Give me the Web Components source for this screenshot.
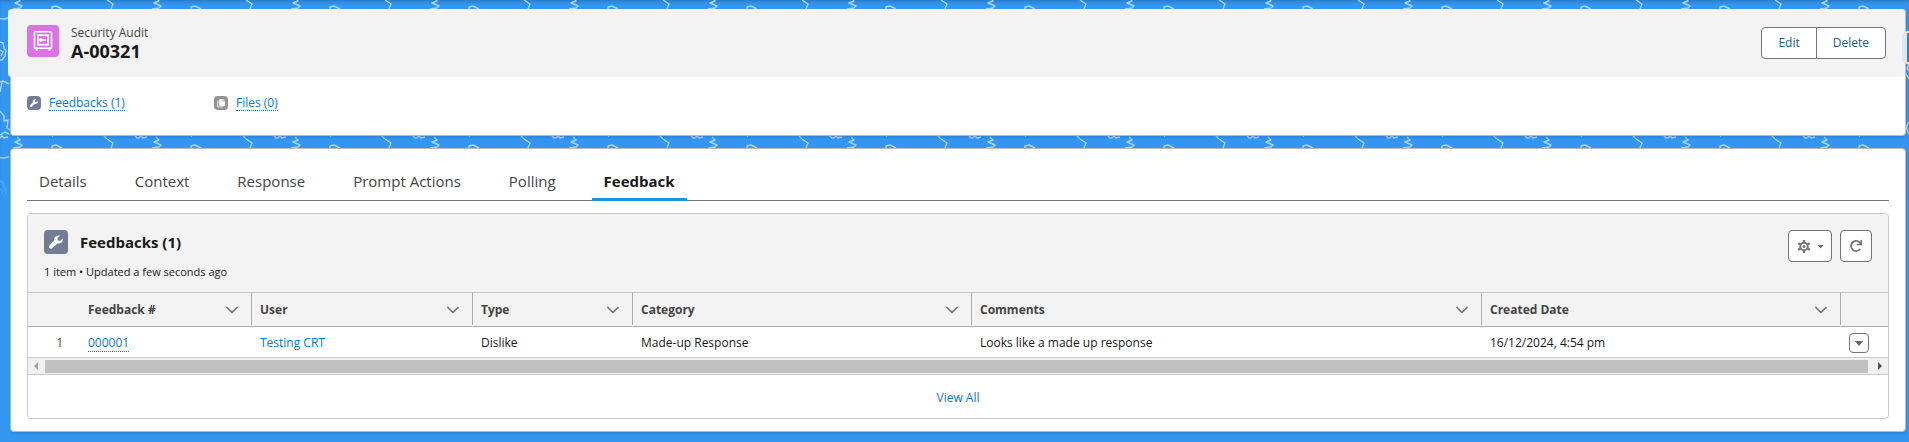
<!DOCTYPE html>
<html lang="en">
<head>
<meta charset="utf-8">
<title>A-00321 | Security Audit</title>
<style>
  html {
    min-height: 100%;
    background: #3296f2;
  }
  body {
    margin: 0;
    font-family: "Open Sans", "Noto Sans", sans-serif;
    font-size: 12px;
    line-height: 18px;
    color: #181818;
    --link: #0b76d3;
    --border: #c9c9c9;
    --border-dark: #747474;
    --shade: #f3f3f3;
  }
</style>
</head>
<body>
<record-page>
  <record-header slot="header" entity="Security Audit" name="A-00321">
    <button-group slot="actions" labels="Edit,Delete"></button-group>
    <quick-link icon="wrench" label="Feedbacks (1)"></quick-link>
    <quick-link icon="files" label="Files (0)"></quick-link>
  </record-header>
  <tab-panel tabs="Details,Context,Response,Prompt Actions,Polling,Feedback" active="Feedback">
    <related-list heading="Feedbacks (1)" meta="1 item • Updated a few seconds ago">
      <feedback-table></feedback-table>
    </related-list>
  </tab-panel>
</record-page>

<script>
const icons = {
  safe: `<svg viewBox="0 0 32 32" fill="none" stroke="#fff">
    <rect x="7.5" y="6.7" width="17" height="16.5" rx="1" stroke-width="1.6"/>
    <rect x="11" y="10.2" width="10" height="9.5" stroke-width="1.7"/>
    <circle cx="13.8" cy="15" r="1.8" fill="#fff" stroke="none"/>
    <path d="M14 15h5" stroke-width="1.8"/>
    <path d="M9.5 23.5v1.300M22.500 23.500v1.300" stroke-width="2.4" stroke-linecap="round"/>
  </svg>`,
  wrench: `<svg viewBox="0 0 24 24">
    <path d="M18.7 8.6l-2.600 2.300-2.200-.4-.6-2.100 2.500-2.700c-2.400-.9-5.200.4-5.700 3-.1.700-.1 1.300.1 1.900l-4.600 4.700c-.8.800-.8 2 0 2.800.8.800 2 .8 2.800 0l4.800-4.700c3.300.9 6.400-1.500 5.500-4.800z" fill="#fff"/>
  </svg>`,
  files: `<svg viewBox="0 0 24 24" fill="#fff">
    <path d="M10.500 5h4.500v3.500c0 .6.400 1 1 1h3v6.500c0 .8-.7 1.500-1.500 1.500h-7c-.8 0-1.500-.7-1.500-1.500v-9.500c0-.8.700-1.500 1.500-1.500z"/>
    <path d="M16 5l3 3.300h-3z"/>
    <path d="M7.500 7.500h-.5c-.8 0-1.500.7-1.500 1.500v9c0 1 .7 1.700 1.700 1.700h7.300c.8 0 1.300-.4 1.300-1.200h-6.800c-.9 0-1.500-.6-1.500-1.500z" opacity=".75"/>
  </svg>`,
  chevron: `<svg viewBox="0 0 12 12" fill="none" stroke="#747474" stroke-width="1.7" stroke-linecap="round" stroke-linejoin="round">
    <path d="M1 3.500l5 5 5-5"/>
  </svg>`,
  gear: `<svg viewBox="0 0 14 14" fill="none" stroke="#747474">
    <circle cx="7" cy="7.5" r="3.7" stroke-width="1.9"/>
    <circle cx="7" cy="7.5" r="1.500" fill="#747474" stroke="none"/>
    <path d="M7 1v2.500M7 11.500v2.500M1.300 4.300l2.100 1.200M10.600 9.500l2.100 1.200M1.300 10.700l2.100-1.200M10.600 5.500l2.100-1.200" stroke-width="2.4"/>
  </svg>`,
  refresh: `<svg viewBox="0 0 14 14" fill="none" stroke="#747474" stroke-width="1.9" stroke-linecap="round">
    <path d="M10.700 10.400a5 5 0 1 1-.2-7.100l1 1"/>
    <path d="M12.300 1.500v4h-4" stroke-width="1.6" stroke-linejoin="round"/>
  </svg>`,
  down: `<svg viewBox="0 0 10 10"><path d="M.8 3h8.400l-4.200 5z" fill="#666"/></svg>`,
};

class SldsIcon extends HTMLElement {
  constructor() {
    super();
    this.attachShadow({ mode: "open" });
    this.shadowRoot.innerHTML = /* HTML */ `
      <style>
        :host {
          display: block;
          flex: none;
          width: 12px;
          height: 12px;
        }
        :host([name="safe"]) {
          width: 32px;
          height: 32px;
          border-radius: 4px;
          background: #d874e4;
        }
        :host([name="wrench"]) {
          width: 24px;
          height: 24px;
          border-radius: 4px;
          background: #747d98;
        }
        :host([name="files"]) {
          border-radius: 4px;
          background: #939393;
        }
        :host([size="small"]) {
          width: 14px;
          height: 14px;
        }
        svg {
          display: block;
          width: 100%;
          height: 100%;
        }
      </style>
      ${icons[this.getAttribute("name")]}
    `;
  }
}

class PageBackdrop extends HTMLElement {
  constructor() {
    super();
    this.attachShadow({ mode: "open" });
    this.shadowRoot.innerHTML = /* HTML */ `
      <style>
        :host {
          position: absolute;
          inset: 0 0 auto;
          height: 200px;
          overflow: hidden;
          box-shadow: inset 0 3px 4px -2px rgba(0, 0, 0, 0.25);
        }
        svg {
          display: block;
          width: 100%;
          height: 100%;
          -webkit-mask-image: linear-gradient(#000 150px, transparent 200px);
          mask-image: linear-gradient(#000 150px, transparent 200px);
        }
      </style>
      <svg fill="none" stroke="#a9d5fb" stroke-width="1.4" stroke-linejoin="round">
        <defs>
          <pattern id="doodle" width="139" height="139" patternUnits="userSpaceOnUse">
            <path d="M107 0l6 4-2 5M104 136l3 3"/>
            <path d="M19 0l1 1-5 2 7 3-2 2-7 1M17 137l2 2"/>
            <path d="M0 138l2-2 2 2 4-1M135 136l2 2 2 0"/>
            <path d="M52 9v-2l4-1 6 3M52 136h1"/>
            <path d="M0 18.500c3 .8 6 .5 9-1"/>
            <path d="M0 42l3 1 1 5 2 3-1 5-3 4h-2M0 50l3 2-2 4"/>
            <path d="M0 82l3-1 6 3M2 82l-2 10M0 111l4 5v5l4-1-1 8 3 2M0 135l5-3 4 2"/>
            <path d="M99 62l3 3-2 3 3 4M98 72l4 7M103 122c-5 3-4 9 0 12"/>
          </pattern>
        </defs>
        <rect width="100%" height="100%" fill="url(#doodle)" stroke="none"/>
      </svg>
    `;
  }
}

class RecordPage extends HTMLElement {
  constructor() {
    super();
    this.attachShadow({ mode: "open" });
    this.shadowRoot.innerHTML = /* HTML */ `
      <style>
        :host {
          display: block;
          position: relative;
        }
        main {
          display: flex;
          flex-direction: column;
          gap: 12px;
          position: relative;
          padding: 9px 3px 10px 10px;
        }
        /* handle of the panel docked to the window's edge */
        .dock {
          box-sizing: border-box;
          position: absolute;
          top: 31px;
          right: 0;
          width: 7px;
          height: 33px;
          border: 2px solid #dfe7ee;
          border-right: 0;
          border-radius: 6px 0 0 6px;
          background: linear-gradient(90deg, #dfe7ee 3px, #2584cb 3px);
        }
      </style>
      <page-backdrop></page-backdrop>
      <main>
        <slot name="header"></slot>
        <slot></slot>
      </main>
      <div class="dock"></div>
    `;
  }
}

class RecordHeader extends HTMLElement {
  constructor() {
    super();
    this.attachShadow({ mode: "open" });
    this.shadowRoot.innerHTML = /* HTML */ `
      <style>
        :host {
          display: block;
          border: 1px solid #bbb;
          border-top: 0;
          border-radius: 4px;
          background: #fff;
          box-shadow: 0 2px 2px rgba(0, 0, 0, 0.1);
        }
        header {
          display: flex;
          align-items: center;
          gap: 12px;
          margin-left: -3px;
          padding: 16px 19px;
          border-radius: 4px;
          background: var(--shade);
        }
        slds-icon {
          align-self: flex-start;
        }
        .title {
          flex: 1;
        }
        p,
        h1 {
          margin: 0;
        }
        p {
          font-size: 12px;
          line-height: 16px;
          color: #444;
        }
        h1 {
          font-size: 18px;
          line-height: 20px;
        }
        nav {
          display: flex;
          padding: 17px 16px 23px;
          min-height: 18px;
        }
      </style>
      <header>
        <slds-icon name="safe"></slds-icon>
        <div class="title">
          <p>${this.getAttribute("entity")}</p>
          <h1>${this.getAttribute("name")}</h1>
        </div>
        <slot name="actions"></slot>
      </header>
      <nav><slot></slot></nav>
    `;
  }
}

class ButtonGroup extends HTMLElement {
  constructor() {
    super();
    this.attachShadow({ mode: "open" });
    const labels = this.getAttribute("labels").split(",");
    this.shadowRoot.innerHTML = /* HTML */ `
      <style>
        :host {
          display: flex;
        }
        button {
          height: 32px;
          padding: 0 16px;
          border: 1px solid var(--border-dark);
          background: #fff;
          color: #1b6085;
          font: inherit;
          cursor: pointer;
        }
        button + button {
          margin-left: -1px;
        }
        button:first-of-type {
          border-radius: 4px 0 0 4px;
        }
        button:last-of-type {
          border-radius: 0 4px 4px 0;
        }
      </style>
      ${labels.map((label) => `<button type="button">${label}</button>`).join("")}
    `;
  }
}

class QuickLink extends HTMLElement {
  constructor() {
    super();
    this.attachShadow({ mode: "open" });
    this.shadowRoot.innerHTML = /* HTML */ `
      <style>
        :host {
          display: flex;
          align-items: center;
          gap: 8px;
          width: 187px;
        }
        a {
          border-bottom: 1px dotted currentColor;
          color: var(--link);
          line-height: 15px;
          text-decoration: none;
        }
      </style>
      <slds-icon name="${this.getAttribute("icon")}" size="small"></slds-icon>
      <a href="#">${this.getAttribute("label")}</a>
    `;
  }
}

class TabPanel extends HTMLElement {
  constructor() {
    super();
    this.attachShadow({ mode: "open" });
    const active = this.getAttribute("active");
    const tabs = this.getAttribute("tabs").split(",");
    this.shadowRoot.innerHTML = /* HTML */ `
      <style>
        :host {
          display: block;
          padding: 12px 16px;
          border: 1px solid #bbb;
          border-radius: 4px;
          background: #fff;
          box-shadow: 0 2px 2px rgba(0, 0, 0, 0.1);
        }
        [role="tablist"] {
          display: flex;
          gap: 24px;
          margin-bottom: 12px;
          border-bottom: 1px solid var(--border-dark);
        }
        a {
          height: 37px;
          margin-bottom: -1px;
          padding: 0 12px;
          border-bottom: 3px solid transparent;
          color: #444;
          font-size: 15px;
          line-height: 40px;
          text-decoration: none;
        }
        a[aria-selected="true"] {
          border-color: #1b96dd;
          color: #181818;
          font-weight: 700;
        }
      </style>
      <div role="tablist">
        ${tabs
          .map((tab) => `<a href="#" role="tab" aria-selected="${tab === active}">${tab}</a>`)
          .join("")}
      </div>
      <slot></slot>
    `;
  }
}

class RelatedList extends HTMLElement {
  constructor() {
    super();
    this.attachShadow({ mode: "open" });
    this.shadowRoot.innerHTML = /* HTML */ `
      <style>
        :host {
          display: block;
          overflow: hidden;
          border: 1px solid var(--border);
          border-radius: 4px;
        }
        header {
          display: flex;
          align-items: flex-start;
          gap: 8px;
          padding: 16px 16px 11px;
          border-bottom: 1px solid var(--border);
          background: var(--shade);
        }
        .info {
          flex: 1;
        }
        .title {
          display: flex;
          align-items: center;
          gap: 12px;
          height: 24px;
        }
        h2,
        p {
          margin: 0;
        }
        h2 {
          font-size: 15px;
          line-height: 24px;
        }
        p {
          margin-top: 9px;
          font-size: 11px;
          line-height: 18px;
        }
        button {
          display: flex;
          align-items: center;
          justify-content: center;
          gap: 6px;
          width: 32px;
          height: 32px;
          padding: 0;
          border: 1px solid var(--border-dark);
          border-radius: 4px;
          background: #fff;
        }
        .menu {
          width: 44px;
        }
        .menu slds-icon:last-child {
          width: 7px;
          height: 7px;
        }
        footer {
          display: flex;
          justify-content: center;
          padding: 14px 0 11px;
        }
        a {
          color: var(--link);
          text-decoration: none;
        }
      </style>
      <header>
        <div class="info">
          <div class="title">
            <slds-icon name="wrench"></slds-icon>
            <h2>${this.getAttribute("heading")}</h2>
          </div>
          <p>${this.getAttribute("meta")}</p>
        </div>
        <button type="button" class="menu" aria-label="List view controls">
          <slds-icon name="gear" size="small"></slds-icon>
          <slds-icon name="down"></slds-icon>
        </button>
        <button type="button" aria-label="Refresh">
          <slds-icon name="refresh" size="small"></slds-icon>
        </button>
      </header>
      <slot></slot>
      <footer><a href="#">View All</a></footer>
    `;
  }
}

class FeedbackTable extends HTMLElement {
  constructor() {
    super();
    this.attachShadow({ mode: "open" });
    const columns = [
      ["Feedback #", 172],
      ["User", 221],
      ["Type", 160],
      ["Category", 339],
      ["Comments", 0],
      ["Created Date", 359],
    ];
    this.shadowRoot.innerHTML = /* HTML */ `
      <style>
        :host {
          display: block;
        }
        table {
          width: 100%;
          table-layout: fixed;
          border-collapse: separate;
          border-spacing: 0;
        }
        th,
        td {
          padding: 0 0 0 8px;
          text-align: left;
          white-space: nowrap;
        }
        th {
          height: 33px;
          border-bottom: 1px solid #aeaeae;
          background: var(--shade);
          color: #444;
        }
        .head {
          display: flex;
          align-items: center;
          justify-content: space-between;
          height: 30px;
          margin-bottom: 1px;
          padding: 2px 13px 0 0;
          border-right: 1px solid #aeaeae;
        }
        td {
          height: 28px;
          padding-top: 2px;
          border-bottom: 1px solid var(--border);
        }
        .number {
          padding-right: 17px;
          color: #514f4d;
          text-align: right;
        }
        .action button {
          display: flex;
          align-items: center;
          justify-content: center;
          width: 20px;
          height: 20px;
          padding: 0;
          border: 1px solid var(--border-dark);
          border-radius: 4px;
          background: #fff;
        }
        .action slds-icon {
          width: 10px;
          height: 10px;
        }
        a {
          color: var(--link);
          text-decoration: none;
        }
        .record {
          border-bottom: 1px dotted currentColor;
        }
        .scrollbar {
          display: flex;
          align-items: center;
          justify-content: space-between;
          height: 16px;
          border-bottom: 1px solid var(--border);
          background: #f1f1f1;
        }
        .thumb {
          flex: 1;
          height: 13px;
          background: #c1c1c1;
        }
        .arrow {
          box-sizing: border-box;
          border: 4px solid transparent;
        }
        .left {
          margin: 0 7px 0 6px;
          border-left-width: 0;
          border-right-color: #a3a3a3;
        }
        .right {
          margin: 0 6px 0 10px;
          border-right-width: 0;
          border-left-color: #505050;
        }
      </style>
      <table>
        <colgroup>
          <col style="width: 52px">
          ${columns.map(([, width]) => (width ? `<col style="width: ${width}px">` : "<col>")).join("")}
          <col style="width: 47px">
        </colgroup>
        <thead>
          <tr>
            <th aria-label="Row number"></th>
            ${columns
              .map(([name]) => `<th scope="col"><div class="head">${name}<slds-icon name="chevron"></slds-icon></div></th>`)
              .join("")}
            <th aria-label="Actions"></th>
          </tr>
        </thead>
        <tbody>
          <tr>
            <td class="number">1</td>
            <td><a class="record" href="#">000001</a></td>
            <td><a href="#">Testing CRT</a></td>
            <td>Dislike</td>
            <td>Made-up Response</td>
            <td>Looks like a made up response</td>
            <td>16/12/2024, 4:54 pm</td>
            <td class="action">
              <button type="button" aria-label="Show actions"><slds-icon name="down"></slds-icon></button>
            </td>
          </tr>
        </tbody>
      </table>
      <div class="scrollbar">
        <span class="arrow left"></span>
        <span class="thumb"></span>
        <span class="arrow right"></span>
      </div>
    `;
  }
}

customElements.define("slds-icon", SldsIcon);
customElements.define("page-backdrop", PageBackdrop);
customElements.define("record-page", RecordPage);
customElements.define("record-header", RecordHeader);
customElements.define("button-group", ButtonGroup);
customElements.define("quick-link", QuickLink);
customElements.define("tab-panel", TabPanel);
customElements.define("related-list", RelatedList);
customElements.define("feedback-table", FeedbackTable);
</script>
</body>
</html>
